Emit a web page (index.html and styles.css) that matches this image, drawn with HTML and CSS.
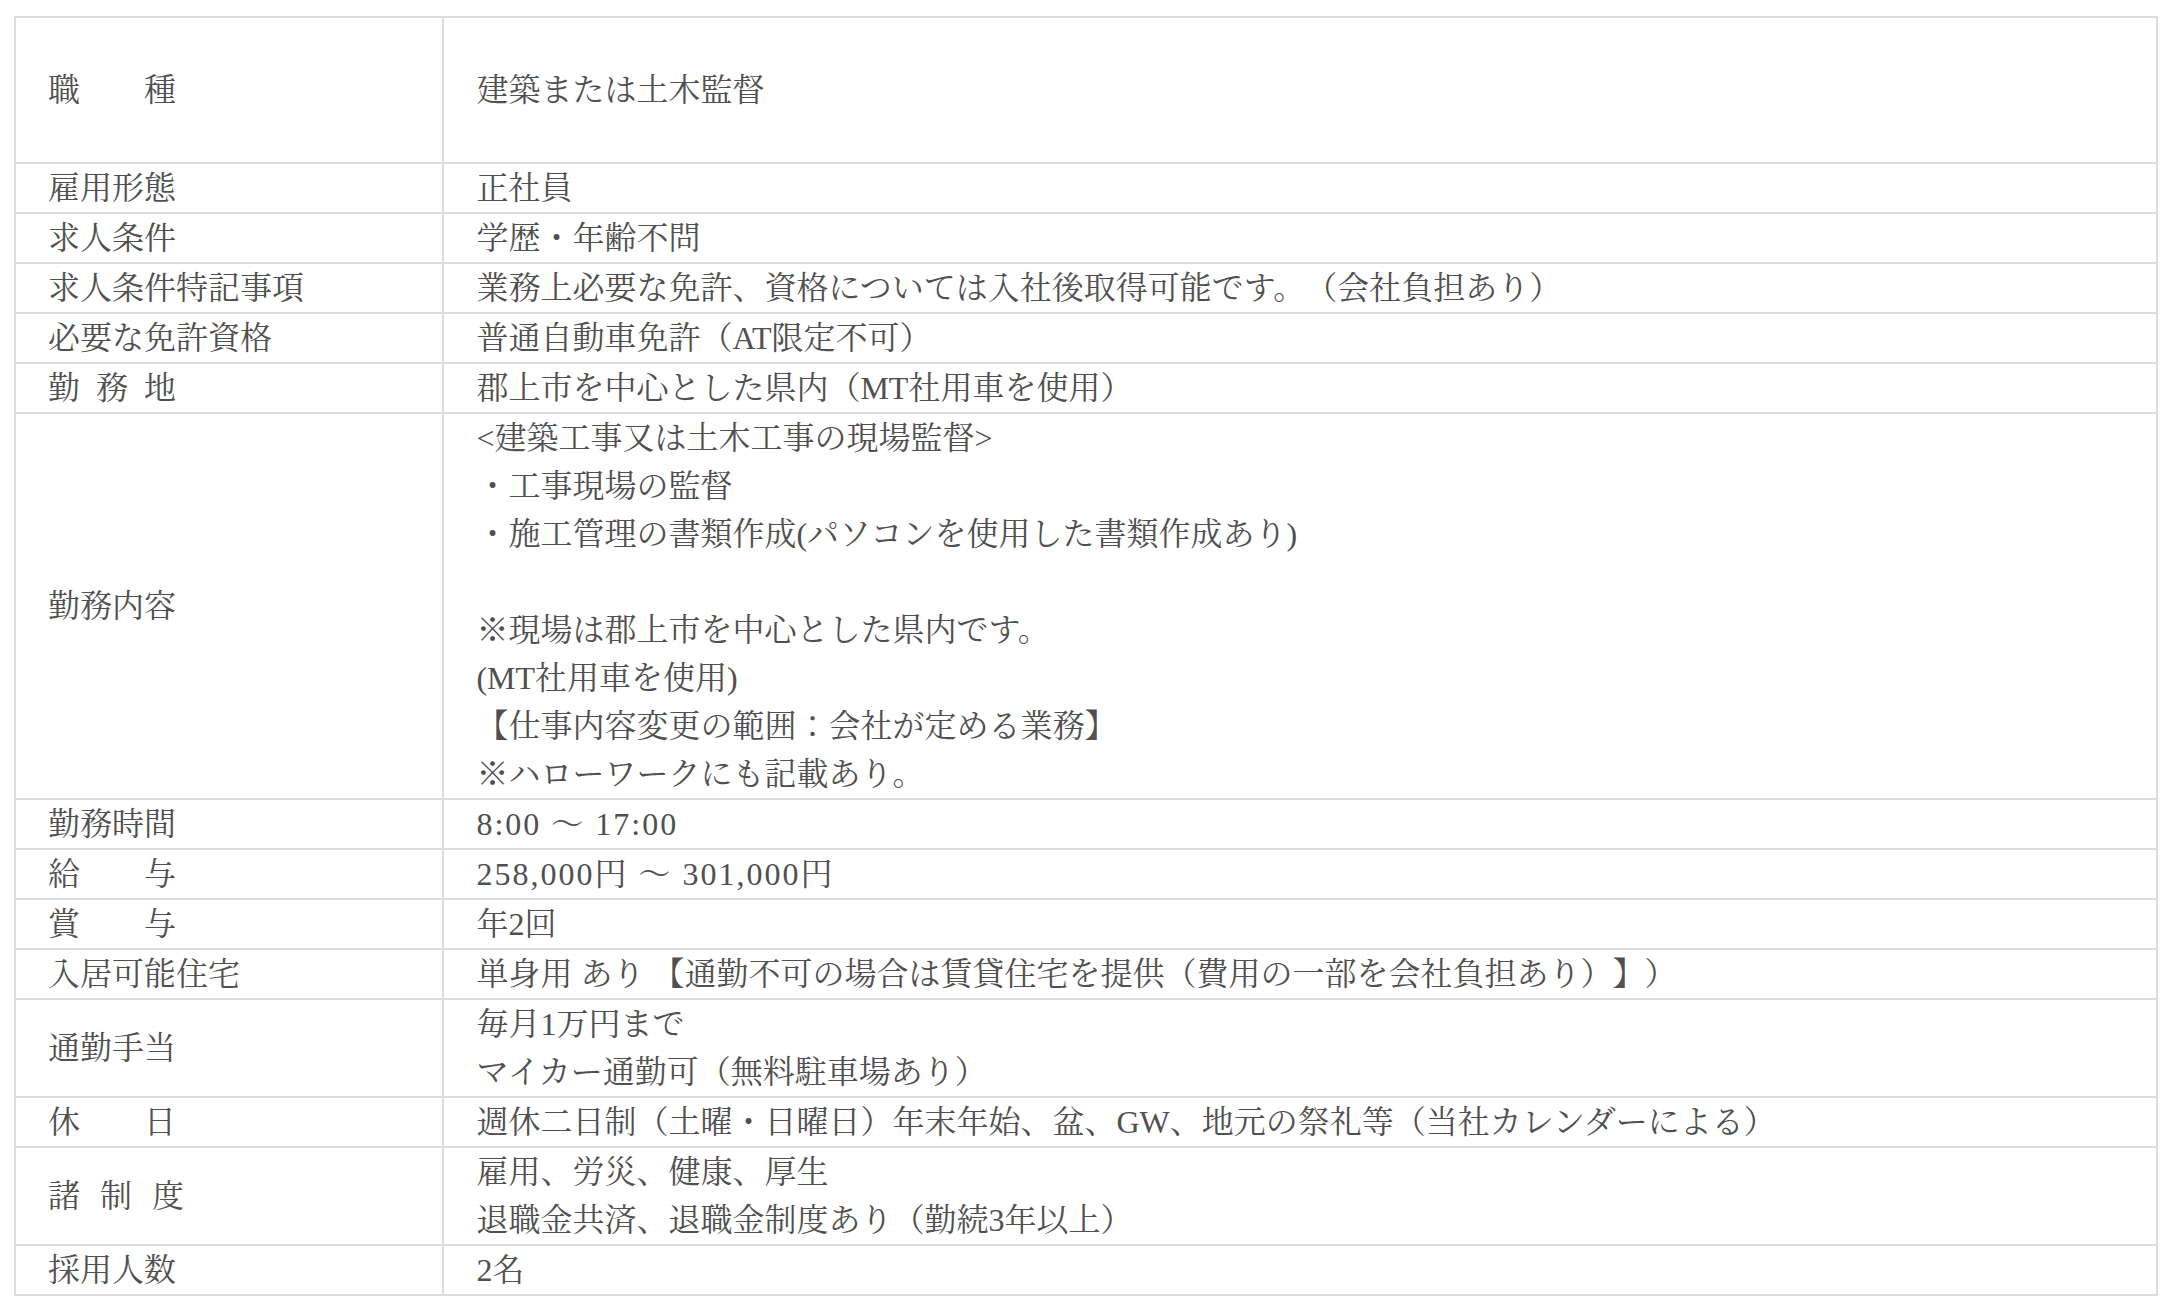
FILE: index.html
```html
<!DOCTYPE html>
<html lang="ja">
<head>
<meta charset="utf-8">
<title>募集要項</title>
<link rel="stylesheet" href="styles.css">
</head>
<body>
<div class="page">
<table class="recruit">
<tbody>
<tr class="first"><th>職　　種</th><td>建築または土木監督</td></tr>
<tr><th>雇用形態</th><td>正社員</td></tr>
<tr><th>求人条件</th><td>学歴・年齢不問</td></tr>
<tr><th>求人条件特記事項</th><td>業務上必要な免許、資格については入社後取得可能です。（会社負担あり）</td></tr>
<tr><th>必要な免許資格</th><td>普通自動車免許（AT限定不可）</td></tr>
<tr><th><span class="sp16">勤務</span>地</th><td>郡上市を中心とした県内（MT社用車を使用）</td></tr>
<tr><th>勤務内容</th><td>&lt;建築工事又は土木工事の現場監督&gt;<br>・工事現場の監督<br>・施工管理の書類作成(パソコンを使用した書類作成あり)<br><br>※現場は郡上市を中心とした県内です。<br>(MT社用車を使用)<br>【仕事内容変更の範囲：会社が定める業務】<br>※ハローワークにも記載あり。</td></tr>
<tr><th>勤務時間</th><td><span class="num">8:00 ～ 17:00</span></td></tr>
<tr><th>給　　与</th><td><span class="num">258,000円 ～ 301,000円</span></td></tr>
<tr><th>賞　　与</th><td>年2回</td></tr>
<tr><th>入居可能住宅</th><td>単身用 あり 【通勤不可の場合は賃貸住宅を提供（費用の一部を会社負担あり）】）</td></tr>
<tr><th>通勤手当</th><td>毎月1万円まで<br>マイカー通勤可（無料駐車場あり）</td></tr>
<tr><th>休　　日</th><td>週休二日制（土曜・日曜日）年末年始、盆、GW、地元の祭礼等（当社カレンダーによる）</td></tr>
<tr><th><span class="sp20">諸制</span>度</th><td>雇用、労災、健康、厚生<br>退職金共済、退職金制度あり（勤続3年以上）</td></tr>
<tr><th>採用人数</th><td>2名</td></tr>
</tbody>
</table>
</div>
</body>
</html>
```

FILE: styles.css
```css
html, body {
  margin: 0;
  padding: 0;
  background: #ffffff;
}

.page {
  padding: 16px 18px 0 14px;
}

.recruit {
  width: 100%;
  border-collapse: collapse;
  border: 2px solid #dddddd;
  font-family: "Liberation Serif", "Noto Serif CJK JP", "Noto Sans CJK JP", serif;
  font-size: 32px;
  line-height: 48px;
  color: #505050;
  text-spacing-trim: space-all;
}

.recruit th,
.recruit td {
  border: 2px solid #dddddd;
  padding: 0 32px;
  text-align: left;
  font-weight: normal;
  vertical-align: middle;
}

.recruit th {
  width: 20%;
}

.recruit .first th,
.recruit .first td {
  padding-top: 48px;
  padding-bottom: 48px;
}

.sp16 {
  letter-spacing: 16px;
}

.sp20 {
  letter-spacing: 20px;
}

.num {
  letter-spacing: 2px;
}
```
